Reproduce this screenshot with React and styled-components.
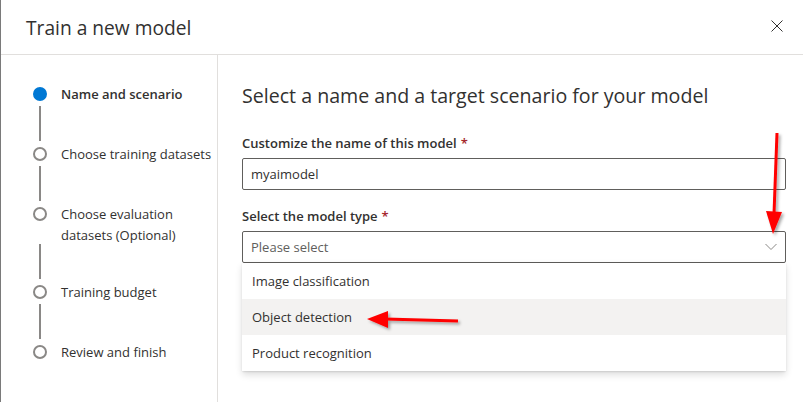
import React from "react";
import styled, { createGlobalStyle } from "styled-components";

const Global = createGlobalStyle`
  html, body { margin: 0; padding: 0; background: #fff; }
  body { font-family: "Segoe UI", "Open Sans", "Noto Sans", sans-serif; color: #323130; }
  * { box-sizing: border-box; }
`;

const Page = styled.div`
  position: relative;
  width: 803px;
  height: 402px;
  border-left: 1px solid #7a7a7a;
  background: #fff;
  overflow: hidden;
  display: flex;
  flex-direction: column;
`;

const Header = styled.header`
  height: 55px;
  flex: none;
  border-bottom: 1px solid #e1dfdd;
  display: flex;
  align-items: center;
  justify-content: space-between;
  padding: 0 10px 0 25px;
`;

const Title = styled.h1`
  margin: 2px 0 0;
  font-size: 19.2px;
  line-height: 28px;
  font-weight: 400;
  color: #323130;
`;

const CloseButton = styled.button`
  width: 12px;
  height: 12px;
  margin: 0 10px 2px 0;
  padding: 0;
  border: none;
  background: none;
  display: flex;
  color: #323130;
`;

const Body = styled.div`
  flex: 1;
  display: flex;
  min-height: 0;
`;

const Nav = styled.nav`
  width: 217px;
  flex: none;
  border-right: 1px solid #e1dfdd;
  padding: 29px 0 0 32px;
  display: flex;
  flex-direction: column;
`;

const Step = styled.div`
  display: flex;
  gap: 14px;
`;

const Indicator = styled.div`
  width: 14px;
  flex: none;
  display: flex;
  flex-direction: column;
  align-items: center;
`;

const DotBox = styled.div`
  height: 20px;
  display: flex;
  align-items: center;
`;

const Dot = styled.span`
  width: 14px;
  height: 14px;
  border-radius: 50%;
  background: ${(p) => (p.$active ? "#0078d4" : "#fff")};
  border: 2px solid ${(p) => (p.$active ? "#0078d4" : "#8a8886")};
`;

const Connector = styled.span`
  width: 2px;
  height: 35px;
  background: #8a8886;
  margin: ${(p) => p.$top ?? 2}px 0 3px;
`;

const StepLabel = styled.div`
  flex: 1;
  font-size: 13px;
  line-height: 21px;
  font-weight: ${(p) => (p.$active ? 600 : 400)};
  color: #323130;
  white-space: ${(p) => (p.$wrap ? "normal" : "nowrap")};
  max-width: ${(p) => (p.$wrap ? "125px" : "none")};
`;

const Main = styled.main`
  flex: 1;
  padding: 27px 17px 0 24px;
  display: flex;
  flex-direction: column;
`;

const Heading = styled.h2`
  margin: 0 0 23px;
  font-size: 19.6px;
  line-height: 28px;
  font-weight: 400;
  color: #323130;
`;

const Label = styled.label`
  display: block;
  font-size: 13px;
  line-height: 20px;
  font-weight: 600;
  color: #323130;
  margin-bottom: 5px;
`;

const Required = styled.span`
  color: #a4262c;
  margin-left: 4px;
`;

const Field = styled.div`
  margin-bottom: 16px;
  position: relative;
`;

const Box = styled.div`
  height: 32px;
  border: 1px solid #605e5c;
  border-radius: 2px;
  display: flex;
  align-items: center;
  justify-content: space-between;
  padding: 0 8px 0 8px;
  font-size: 13px;
  color: ${(p) => (p.$placeholder ? "#605e5c" : "#323130")};
`;

const Menu = styled.ul`
  position: absolute;
  left: 0;
  right: 0;
  top: 57px;
  margin: 0;
  padding: 0;
  list-style: none;
  background: #fff;
  border-radius: 2px;
  box-shadow: 0 3.2px 7.2px rgba(0,0,0,0.13), 0 0.6px 1.8px rgba(0,0,0,0.11);
`;

const Option = styled.li`
  height: 36px;
  display: flex;
  align-items: center;
  padding: 0 10px;
  font-size: 13px;
  color: #323130;
  background: ${(p) => (p.$hover ? "#f3f2f1" : "#fff")};
`;

const Overlay = styled.svg`
  position: absolute;
  left: 0;
  top: 0;
  pointer-events: none;
  overflow: visible;
`;

const steps = [
  { label: "Name and scenario", active: true },
  { label: "Choose training datasets" },
  { label: "Choose evaluation datasets (Optional)", top: 20, wrap: true },
  { label: "Training budget" },
  { label: "Review and finish", last: true },
];

export default function App() {
  return (
    <>
      <Global />
      <Page>
        <Header>
          <Title>Train a new model</Title>
          <CloseButton aria-label="Close">
            <svg width="12" height="12" viewBox="0 0 12 12">
              <path d="M0.5 0.5L11.5 11.5M11.5 0.5L0.5 11.5" stroke="#323130" strokeWidth="1" fill="none" />
            </svg>
          </CloseButton>
        </Header>
        <Body>
          <Nav>
            {steps.map((s) => (
              <Step key={s.label}>
                <Indicator>
                  <DotBox>
                    <Dot $active={s.active} />
                  </DotBox>
                  {!s.last && <Connector $top={s.top} />}
                </Indicator>
                <StepLabel $active={s.active} $wrap={s.wrap}>{s.label}</StepLabel>
              </Step>
            ))}
          </Nav>
          <Main>
            <Heading>Select a name and a target scenario for your model</Heading>
            <Field>
              <Label>
                Customize the name of this model<Required>*</Required>
              </Label>
              <Box>myaimodel</Box>
            </Field>
            <Field>
              <Label>
                Select the model type<Required>*</Required>
              </Label>
              <Box $placeholder>
                Please select
                <svg width="12" height="8" viewBox="0 0 12 8">
                  <path d="M0.5 1L6 6.5L11.5 1" stroke="#8a8886" strokeWidth="1" fill="none" />
                </svg>
              </Box>
              <Menu>
                <Option>Image classification</Option>
                <Option $hover>Object detection</Option>
                <Option>Product recognition</Option>
              </Menu>
            </Field>
          </Main>
        </Body>
        <Overlay width="803" height="402">
          <defs>
            <filter id="sh" x="-50%" y="-50%" width="200%" height="200%">
              <feDropShadow dx="2" dy="2" stdDeviation="1.5" floodColor="#000" floodOpacity="0.35" />
            </filter>
          </defs>
          <g filter="url(#sh)" fill="#ff0000" stroke="#ff0000">
            <path d="M776 133 L773 214" strokeWidth="3" fill="none" />
            <path d="M765 211 L781 212 L772 234 Z" stroke="none" />
            <path d="M457 321 L384 319" strokeWidth="3" fill="none" />
            <path d="M387 311 L387 328 L366 319 Z" stroke="none" />
          </g>
        </Overlay>
      </Page>
    </>
  );
}
